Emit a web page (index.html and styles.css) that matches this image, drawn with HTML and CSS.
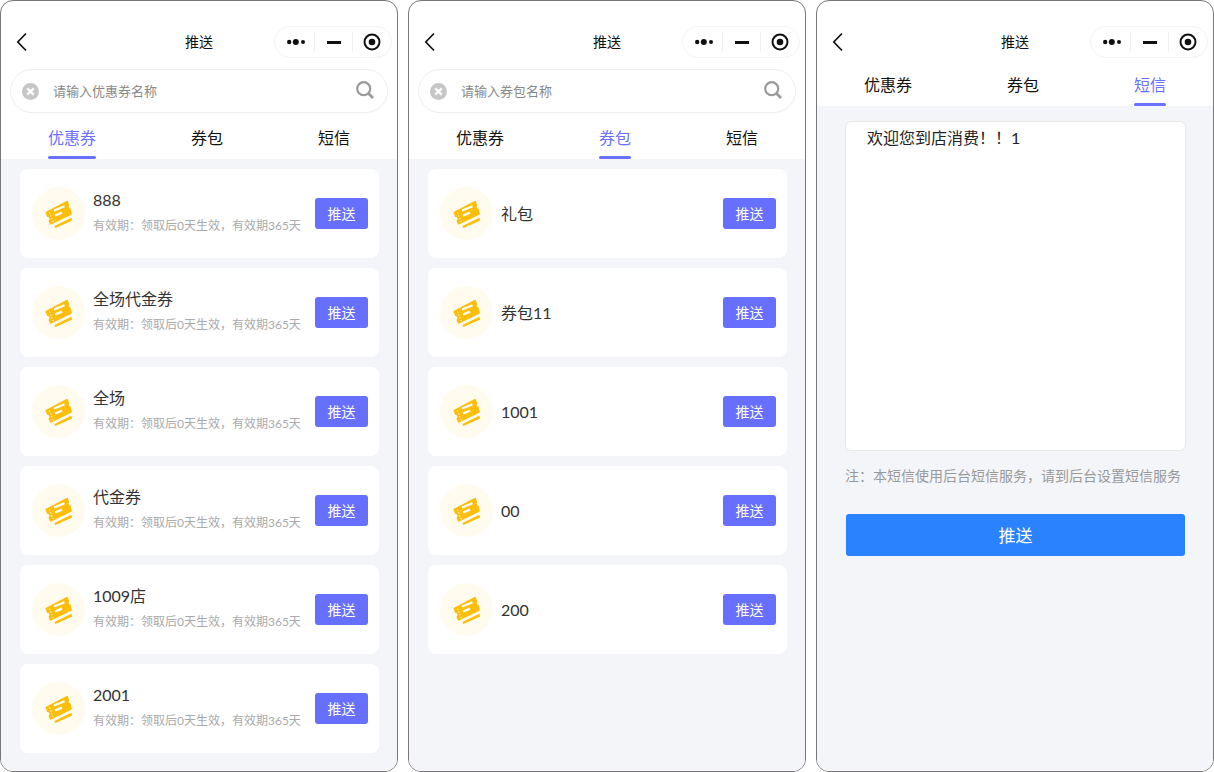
FILE: index.html
```html
<!DOCTYPE html>
<html lang="zh-CN">
<head>
    <meta charset="UTF-8">
    <title>推送</title>
    <link rel="stylesheet" href="styles.css">
</head>
<body>
    <svg class="defs" width="0" height="0">
        <symbol id="ticket" viewBox="0 0 28 28">
            <path d="M1 11.800 21.500 1q1-.5 1.400.5l1.300 3.700a2 2 0 0 0 1.300 3.400l1.300 4.800q.3 1-.6 1.400L6.200 24.600q-1 .4-1.400-.5l-1.300-3.400a2 2 0 0 0-1.300-3.700L.6 13q-.3-.8.4-1.200z" fill="#fdbd0b"/>
            <path d="M4.500 12.500 8.500 23" stroke="#fff" stroke-width="1" stroke-dasharray="1.400 1.600" fill="none"/>
            <path d="M9 10.500 19.500 6.300M10 15.500 17 12.600" stroke="#fff" stroke-width="2.300" fill="none"/>
            <path d="M9.500 26 26.200 17.700l.9 2.100q.3.700-.4 1L11 27.800q-.8.300-1.100-.4z" fill="#fdbd0b"/>
        </symbol>
        <symbol id="back" viewBox="0 0 12 20">
            <path d="M10 1.500 1.800 10l8.200 8.500" fill="none" stroke="#111" stroke-width="1.700"/>
        </symbol>
        <symbol id="clear" viewBox="0 0 16 16">
            <circle cx="8" cy="8" r="8" fill="#c6c6c6"/>
            <path d="M5 5l6 6M11 5l-6 6" stroke="#fff" stroke-width="2.200"/>
        </symbol>
        <symbol id="search" viewBox="0 0 18 18">
            <circle cx="7.700" cy="7.700" r="6.500" fill="none" stroke="#9b9b9b" stroke-width="2.200"/>
            <path d="M12.500 12.500l4.500 4.500" stroke="#9b9b9b" stroke-width="2.600"/>
        </symbol>
        <symbol id="more" viewBox="0 0 20 8">
            <circle cx="4.200" cy="4" r="2.200" fill="#111"/>
            <circle cx="10.800" cy="4" r="3" fill="#111"/>
            <circle cx="18" cy="4" r="2" fill="#111"/>
        </symbol>
        <symbol id="record" viewBox="0 0 18 18">
            <circle cx="9" cy="9" r="7.500" fill="none" stroke="#111" stroke-width="2"/>
            <circle cx="9" cy="9" r="3.300" fill="#111"/>
        </symbol>
    </svg>

    <div class="phone">
        <div class="nav">
            <svg class="back"><use href="#back"/></svg>
            <div class="title">推送</div>
            <div class="capsule">
                <span class="cap-btn"><svg class="cap-more"><use href="#more"/></svg></span>
                <span class="cap-btn"><i class="cap-minus"></i></span>
                <span class="cap-btn"><svg class="cap-record"><use href="#record"/></svg></span>
            </div>
        </div>
        <div class="search">
            <svg class="search-clear"><use href="#clear"/></svg>
            <span class="search-text">请输入优惠券名称</span>
            <svg class="search-icon"><use href="#search"/></svg>
        </div>
        <div class="tabs">
            <span class="tab active">优惠券</span>
            <span class="tab">券包</span>
            <span class="tab">短信</span>
        </div>
        <div class="list">
            <div class="card">
                <span class="badge"><svg class="ticket"><use href="#ticket"/></svg></span>
                <div class="info"><div class="name">888</div><div class="desc">有效期：领取后0天生效，有效期365天</div></div>
                <span class="push">推送</span>
            </div>
            <div class="card">
                <span class="badge"><svg class="ticket"><use href="#ticket"/></svg></span>
                <div class="info"><div class="name">全场代金券</div><div class="desc">有效期：领取后0天生效，有效期365天</div></div>
                <span class="push">推送</span>
            </div>
            <div class="card">
                <span class="badge"><svg class="ticket"><use href="#ticket"/></svg></span>
                <div class="info"><div class="name">全场</div><div class="desc">有效期：领取后0天生效，有效期365天</div></div>
                <span class="push">推送</span>
            </div>
            <div class="card">
                <span class="badge"><svg class="ticket"><use href="#ticket"/></svg></span>
                <div class="info"><div class="name">代金券</div><div class="desc">有效期：领取后0天生效，有效期365天</div></div>
                <span class="push">推送</span>
            </div>
            <div class="card">
                <span class="badge"><svg class="ticket"><use href="#ticket"/></svg></span>
                <div class="info"><div class="name">1009店</div><div class="desc">有效期：领取后0天生效，有效期365天</div></div>
                <span class="push">推送</span>
            </div>
            <div class="card">
                <span class="badge"><svg class="ticket"><use href="#ticket"/></svg></span>
                <div class="info"><div class="name">2001</div><div class="desc">有效期：领取后0天生效，有效期365天</div></div>
                <span class="push">推送</span>
            </div>
        </div>
    </div>

    <div class="phone">
        <div class="nav">
            <svg class="back"><use href="#back"/></svg>
            <div class="title">推送</div>
            <div class="capsule">
                <span class="cap-btn"><svg class="cap-more"><use href="#more"/></svg></span>
                <span class="cap-btn"><i class="cap-minus"></i></span>
                <span class="cap-btn"><svg class="cap-record"><use href="#record"/></svg></span>
            </div>
        </div>
        <div class="search">
            <svg class="search-clear"><use href="#clear"/></svg>
            <span class="search-text">请输入券包名称</span>
            <svg class="search-icon"><use href="#search"/></svg>
        </div>
        <div class="tabs">
            <span class="tab">优惠券</span>
            <span class="tab active">券包</span>
            <span class="tab">短信</span>
        </div>
        <div class="list">
            <div class="card">
                <span class="badge"><svg class="ticket"><use href="#ticket"/></svg></span>
                <div class="info"><div class="name">礼包</div></div>
                <span class="push">推送</span>
            </div>
            <div class="card">
                <span class="badge"><svg class="ticket"><use href="#ticket"/></svg></span>
                <div class="info"><div class="name">券包11</div></div>
                <span class="push">推送</span>
            </div>
            <div class="card">
                <span class="badge"><svg class="ticket"><use href="#ticket"/></svg></span>
                <div class="info"><div class="name">1001</div></div>
                <span class="push">推送</span>
            </div>
            <div class="card">
                <span class="badge"><svg class="ticket"><use href="#ticket"/></svg></span>
                <div class="info"><div class="name">00</div></div>
                <span class="push">推送</span>
            </div>
            <div class="card">
                <span class="badge"><svg class="ticket"><use href="#ticket"/></svg></span>
                <div class="info"><div class="name">200</div></div>
                <span class="push">推送</span>
            </div>
        </div>
    </div>

    <div class="phone">
        <div class="nav">
            <svg class="back"><use href="#back"/></svg>
            <div class="title">推送</div>
            <div class="capsule">
                <span class="cap-btn"><svg class="cap-more"><use href="#more"/></svg></span>
                <span class="cap-btn"><i class="cap-minus"></i></span>
                <span class="cap-btn"><svg class="cap-record"><use href="#record"/></svg></span>
            </div>
        </div>
        <div class="tabs tabs-top">
            <span class="tab">优惠券</span>
            <span class="tab">券包</span>
            <span class="tab active">短信</span>
        </div>
        <div class="sms">
            <div class="sms-box">欢迎您到店消费！！1</div>
            <div class="sms-note">注：本短信使用后台短信服务，请到后台设置短信服务</div>
            <div class="sms-btn">推送</div>
        </div>
    </div>
</body>
</html>
```

FILE: styles.css
```css
* {
    box-sizing: border-box;
}
html, body {
    margin: 0;
    height: 100%;
}
body {
    display: flex;
    gap: 10px;
    font-family: Lato, "Noto Sans CJK SC", "Liberation Sans", sans-serif;
    background: #fff;
    overflow: hidden;
}
.defs {
    display: block;
    height: 0;
    width: 0;
    margin-left: -10px;
}
.phone {
    width: 398px;
    height: 772px;
    flex: none;
    display: flex;
    flex-direction: column;
    border: 1px solid #777;
    border-radius: 13px;
    overflow: hidden;
    background: #fff;
}
.nav {
    height: 68px;
    flex: none;
    padding: 25px 5px 0;
    display: grid;
    grid-template-columns: 1fr auto 1fr;
    grid-template-rows: 32px;
    align-items: center;
}
.back {
    width: 12px;
    height: 20px;
    margin: 0 0 0 10px;
}
.title {
    padding-bottom: 2px;
    font-size: 14px;
    color: #111;
}
.capsule {
    width: 118px;
    height: 32px;
    justify-self: end;
    display: flex;
    align-items: center;
    border: 1px solid #f4f4f4;
    border-radius: 16px;
}
.cap-btn {
    width: 38px;
    height: 20px;
    flex: none;
    display: flex;
    align-items: center;
    justify-content: center;
    border-left: 1px solid #f0f0f0;
}
.cap-btn:first-child {
    width: 39px;
    border-left: none;
}
.cap-more {
    width: 20px;
    height: 8px;
}
.cap-minus {
    display: block;
    width: 14px;
    height: 3px;
    background: #111;
}
.cap-record {
    width: 18px;
    height: 18px;
}
.search {
    height: 44px;
    flex: none;
    margin: 0 9px;
    padding: 0 13px 0 11px;
    display: flex;
    align-items: center;
    border: 1px solid #eee;
    border-radius: 22px;
}
.search-clear {
    width: 17px;
    height: 17px;
}
.search-text {
    flex: 1;
    margin-left: 14px;
    padding-bottom: 2px;
    font-size: 13px;
    color: #888;
}
.search-icon {
    width: 18px;
    height: 18px;
    margin-top: -2px;
}
.tabs {
    flex: none;
    display: flex;
    justify-content: space-between;
    padding: 13px 47px 0;
}
.tabs-top {
    padding-top: 4px;
}
.tab {
    position: relative;
    padding-bottom: 9px;
    font-size: 16px;
    line-height: 24px;
    color: #111;
}
.tab.active {
    color: #6a70ff;
}
.tab.active::after {
    content: "";
    position: absolute;
    left: 0;
    right: 0;
    bottom: 0;
    height: 3px;
    border-radius: 2px;
    background: #6a70ff;
}
.list {
    flex: 1;
    display: flex;
    flex-direction: column;
    gap: 10px;
    padding: 10px 18px 0 19px;
    background: #f4f5f9;
}
.card {
    height: 89px;
    flex: none;
    display: flex;
    align-items: center;
    padding: 0 11px 0 12px;
    background: #fff;
    border-radius: 8px;
}
.badge {
    width: 53px;
    height: 53px;
    flex: none;
    display: flex;
    align-items: center;
    justify-content: center;
    background: #fffcef;
    border-radius: 50%;
}
.ticket {
    width: 28px;
    height: 28px;
}
.info {
    flex: 1;
    min-width: 0;
    margin-left: 8px;
}
.name {
    font-size: 16px;
    line-height: 22px;
    color: #333;
}
.desc {
    margin-top: 3px;
    font-size: 12px;
    line-height: 24px;
    color: #aaa;
    white-space: nowrap;
}
.push {
    width: 53px;
    height: 31px;
    flex: none;
    display: flex;
    align-items: center;
    justify-content: center;
    padding-bottom: 2px;
    font-size: 14px;
    color: #fff;
    background: #676fff;
    border-radius: 3px;
}
.sms {
    flex: 1;
    padding: 15px 27px 0 28px;
    background: #f4f5f9;
}
.sms-box {
    height: 330px;
    padding: 4px 21px;
    font-size: 16px;
    line-height: 24px;
    color: #222;
    background: #fff;
    border: 1px solid #e8e8e8;
    border-radius: 6px;
}
.sms-note {
    margin-top: 15px;
    font-size: 14px;
    line-height: 20px;
    color: #999;
    white-space: nowrap;
}
.sms-btn {
    height: 42px;
    margin: 28px 1px 0;
    display: flex;
    align-items: center;
    justify-content: center;
    padding-bottom: 2px;
    font-size: 17px;
    color: #fff;
    background: #2b82ff;
    border-radius: 3px;
}
```
